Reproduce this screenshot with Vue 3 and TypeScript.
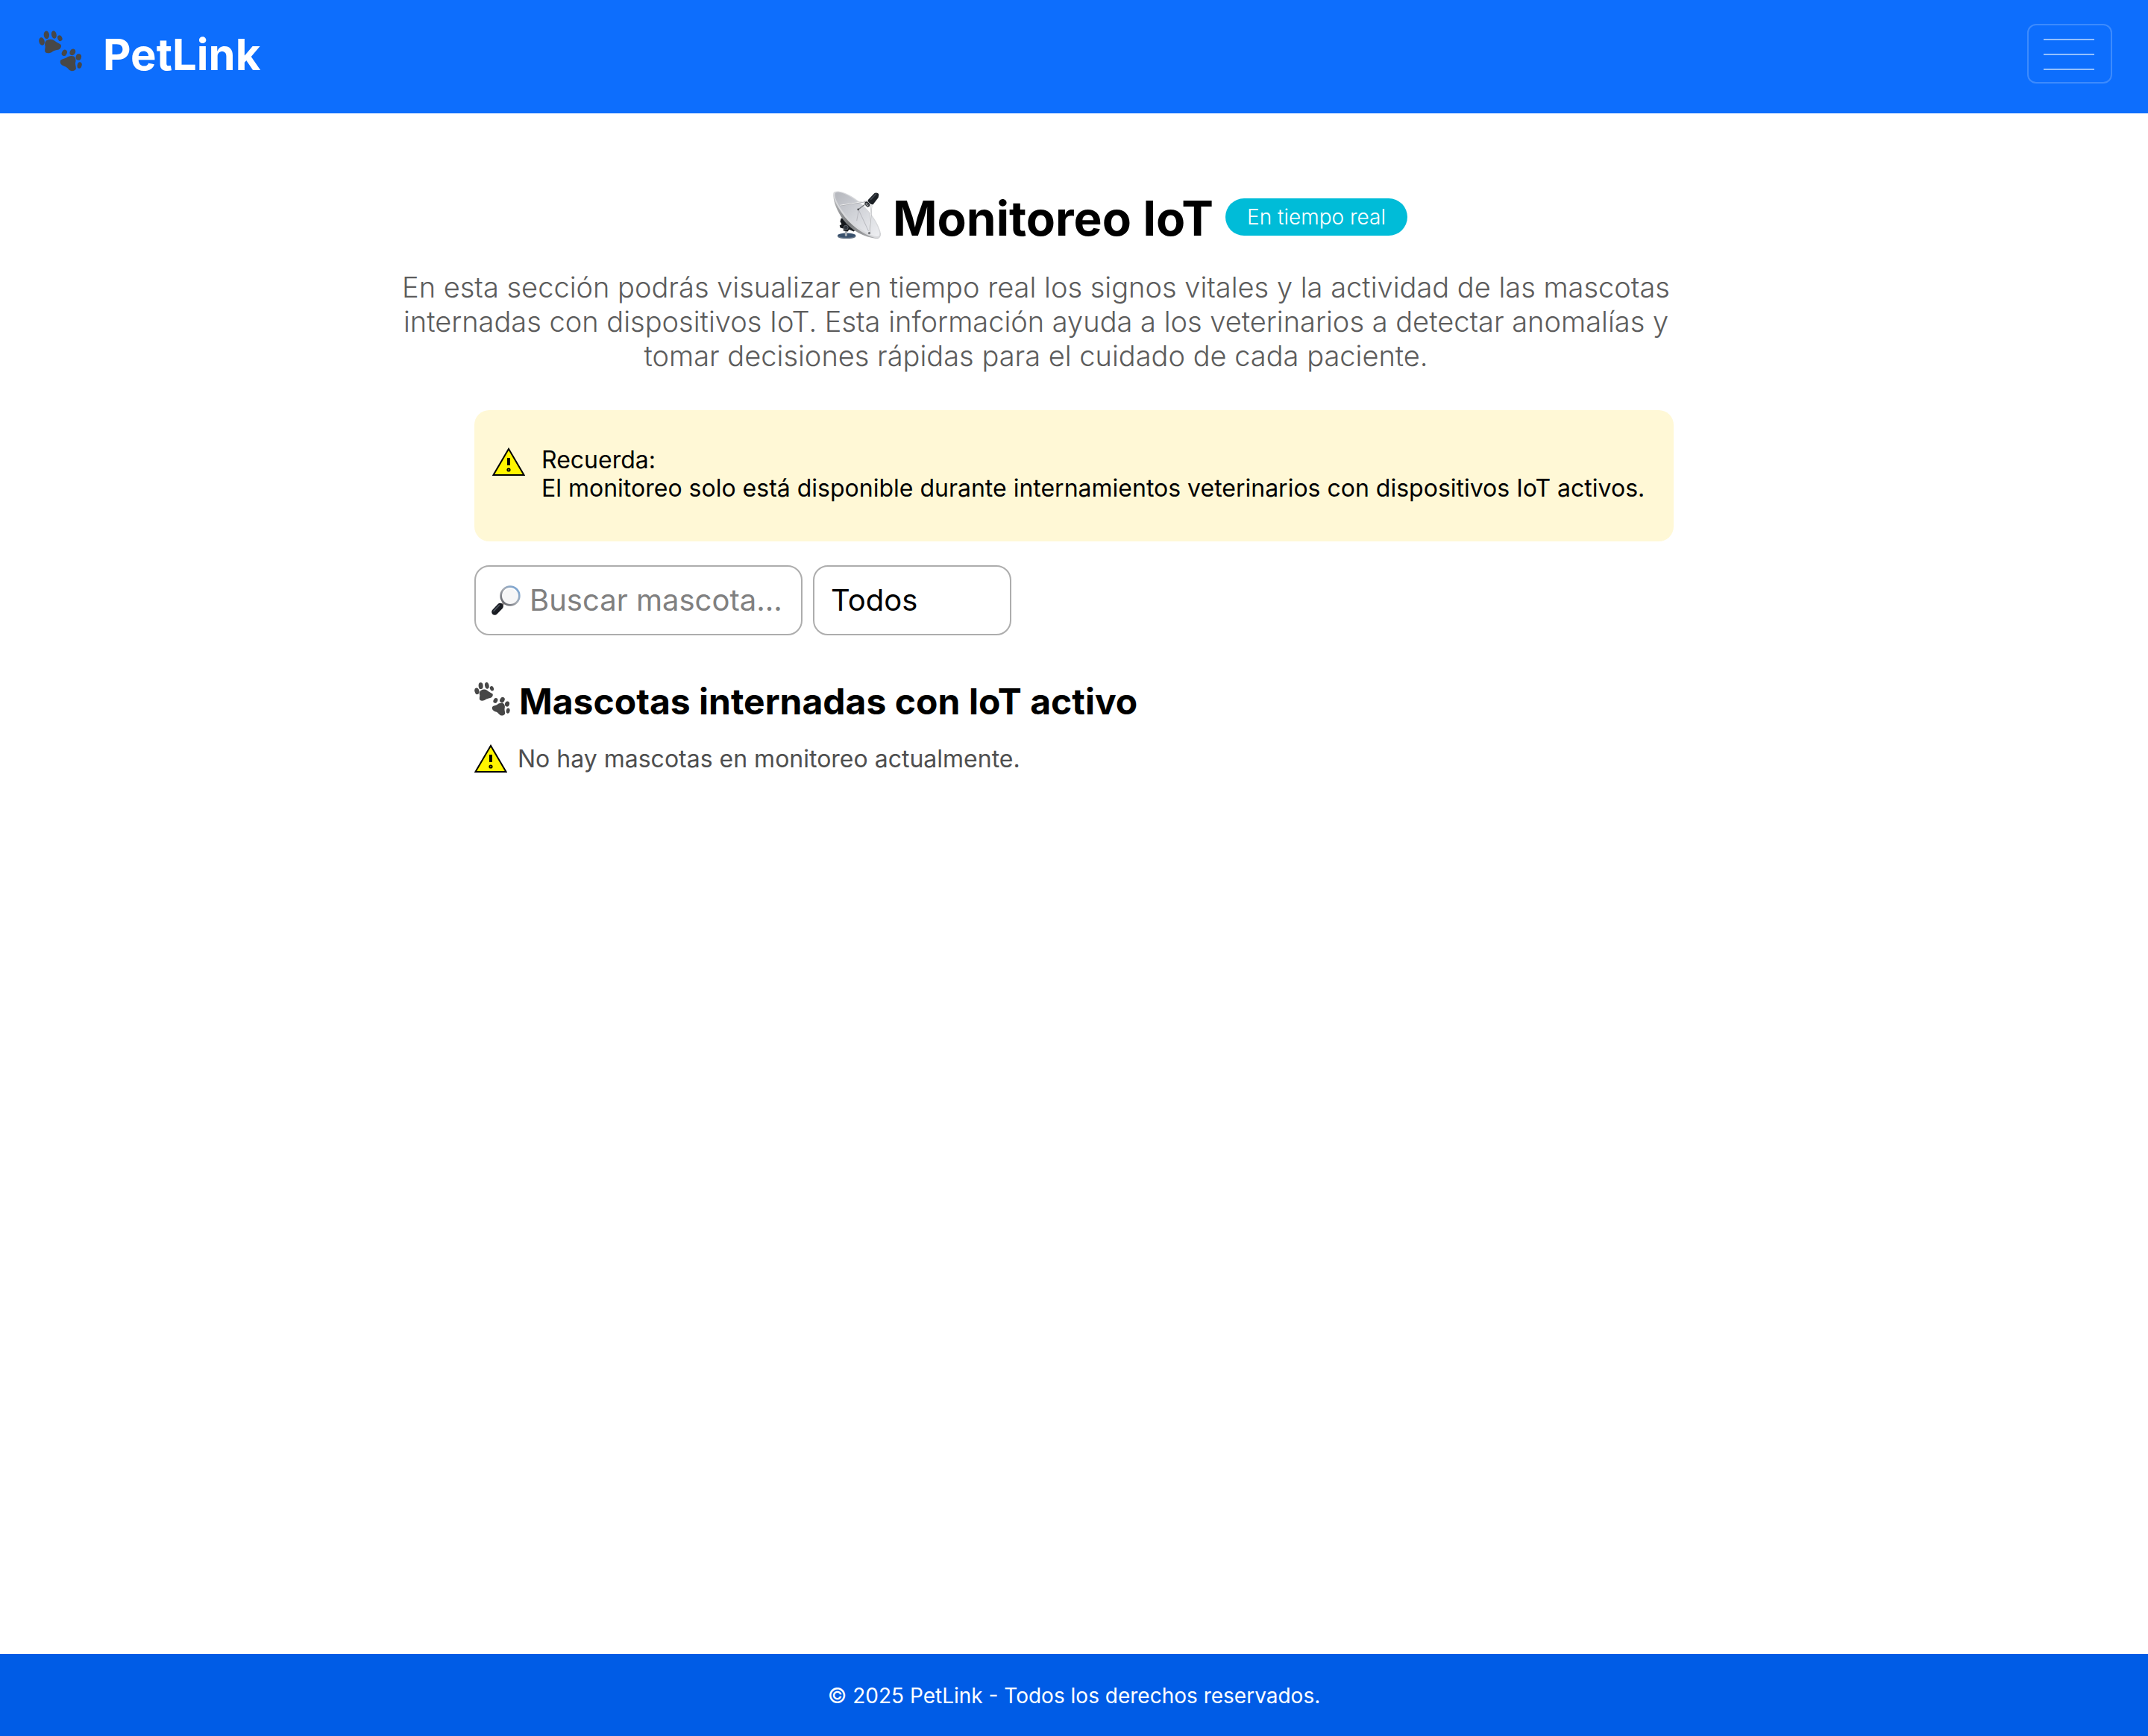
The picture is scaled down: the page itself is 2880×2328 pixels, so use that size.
<script setup lang="ts">
import { ref } from 'vue'

const search = ref('')
const filter = ref('todos')
const menuOpen = ref(false)
</script>

<template>
  <div class="page">
    <svg class="defs" aria-hidden="true">
      <symbol id="paws" viewBox="0 0 174 164">
        <g fill="#474747">
          <ellipse cx="12" cy="43" rx="11" ry="16" transform="rotate(-14 12 43)" />
          <ellipse cx="31" cy="17" rx="11" ry="16" transform="rotate(-4 31 17)" />
          <ellipse cx="61" cy="16" rx="10" ry="16" transform="rotate(-12 61 16)" />
          <ellipse cx="85" cy="30" rx="9" ry="12" transform="rotate(-24 85 30)" />
          <path d="M34 38C42 33 57 34 64 41C72 48 81 51 88 56C93 62 88 73 80 76C70 79 62 79 55 84C46 91 34 92 27 87C22 81 26 72 26 63C22 52 26 42 34 38Z" />
          <ellipse cx="103" cy="89" rx="10" ry="13" transform="rotate(28 103 89)" />
          <ellipse cx="136" cy="86" rx="11" ry="14" transform="rotate(32 136 86)" />
          <ellipse cx="160" cy="106" rx="11" ry="13" transform="rotate(14 160 106)" />
          <ellipse cx="164" cy="139" rx="9" ry="13" transform="rotate(12 164 139)" />
          <path d="M88 119C93 113 103 113 111 109C118 102 131 99 141 103C149 109 150 119 147 130C147 140 151 147 149 155C145 162 133 165 126 160C119 156 117 150 108 145C99 142 88 137 87 130C86 125 86 121 88 119Z" />
        </g>
      </symbol>
      <symbol id="warning" viewBox="0 0 44 38">
        <path d="M22 2L42.500 37H1.500Z" fill="#fff500" stroke="#000" stroke-width="2" />
        <path d="M20 14H24V24H20Z" />
        <circle cx="22" cy="30" r="1.700" fill="#fff500" stroke="#000" stroke-width="1.800" />
      </symbol>
    </svg>

    <header class="topbar">
      <a class="brand" href="#">
        <svg class="brand-icon" aria-hidden="true"><use href="#paws" /></svg>
        <span>PetLink</span>
      </a>
      <button class="toggler" type="button" aria-label="Menú" :aria-expanded="menuOpen" @click="menuOpen = !menuOpen">
        <span class="line"></span>
        <span class="line"></span>
        <span class="line"></span>
      </button>
    </header>

    <main class="content">
      <div class="title-row">
        <svg class="dish" viewBox="0 0 190 190" aria-hidden="true">
          <defs>
            <linearGradient id="bowl" x1="0" y1="0" x2="1" y2="1">
              <stop offset="0" stop-color="#b4b6bc" />
              <stop offset="0.5" stop-color="#d3d5da" />
              <stop offset="1" stop-color="#eeeff2" />
            </linearGradient>
            <linearGradient id="back" x1="0" y1="0" x2="1" y2="1">
              <stop offset="0" stop-color="#c4c5c7" />
              <stop offset="0.5" stop-color="#77797b" />
              <stop offset="1" stop-color="#b9babd" />
            </linearGradient>
          </defs>
          <path d="M18 177V183C25 193 82 193 90 183V177Z" fill="#667586" />
          <ellipse cx="54" cy="177" rx="36" ry="9" fill="#39516d" />
          <path d="M47 150H56V180H47Z" fill="#aab0b7" />
          <path d="M32 108L46 112L76 143L90 155L82 162L64 154L58 162L40 158L42 151L28 146L26 137L34 133L28 122Z" fill="#16191d" />
          <circle cx="51" cy="146" r="9" fill="#30353c" stroke="#777d84" stroke-width="2" />
          <path d="M3 6C-4 32 12 76 41 116C73 159 128 186 172 190C184 190 190 184 189 168L24 4Z" fill="url(#back)" />
          <path d="M2 7C8-4 38 0 76 23C125 53 174 111 188 161C192 184 184 193 166 187C121 174 67 136 33 85C11 52-2 23 2 7Z" fill="#d7d8db" />
          <path d="M9 8C20 0 49 10 79 30C126 62 171 115 183 160C188 180 181 184 165 180C122 167 72 128 38 80C15 48 3 22 9 8Z" fill="url(#bowl)" />
          <path d="M102 76L94 119M101 74L141 160" fill="none" stroke="#b9bac0" stroke-width="3" />
          <path d="M27 58L132 42M153 58L145 166" fill="none" stroke="#a3a5a9" stroke-width="5" />
          <path d="M27 57L132 41M153 58L144 166" fill="none" stroke="#f1f1f2" stroke-width="3" />
          <path d="M100 74L129 52" stroke="#74777b" stroke-width="4" />
          <circle cx="100" cy="74" r="4" fill="#4d4f53" />
          <circle cx="144" cy="168" r="5" fill="#75777b" />
          <path d="M138 37L164 10C169 5 183 8 182 16L180 27L159 54C152 56 139 47 138 37Z" fill="#1c2025" />
          <path d="M150 34L171 12" stroke="#434951" stroke-width="5" stroke-linecap="round" />
          <ellipse cx="136" cy="53" rx="13" ry="9" transform="rotate(48 136 53)" fill="#24272b" stroke="#d7d8da" stroke-width="2" />
          <ellipse cx="135" cy="54" rx="6" ry="3" transform="rotate(48 135 54)" fill="none" stroke="#d7d8da" stroke-width="2" />
        </svg>
        <h1>Monitoreo IoT</h1>
        <span class="badge">En tiempo real</span>
      </div>

      <p class="intro">
        En esta sección podrás visualizar en tiempo real los signos vitales y la actividad de las mascotas
        internadas con dispositivos IoT. Esta información ayuda a los veterinarios a detectar anomalías y
        tomar decisiones rápidas para el cuidado de cada paciente.
      </p>

      <div class="notice" role="note">
        <svg class="warning" aria-hidden="true"><use href="#warning" /></svg>
        <p>Recuerda:<br />El monitoreo solo está disponible durante internamientos veterinarios con dispositivos IoT activos.</p>
      </div>

      <form class="filters" @submit.prevent>
        <label class="search">
          <svg class="magnifier" viewBox="0 0 120 120" aria-hidden="true">
            <defs>
              <linearGradient id="rim" x1="0" y1="1" x2="1" y2="0">
                <stop offset="0" stop-color="#55565c" />
                <stop offset="0.5" stop-color="#a9adb4" />
                <stop offset="1" stop-color="#6fa4dc" />
              </linearGradient>
            </defs>
            <path d="M42 82L54 69" stroke="#98908d" stroke-width="10" />
            <path d="M38 84L16 107" stroke="#191c22" stroke-width="25" stroke-linecap="round" />
            <path d="M34 80L12 103" stroke="#4b525c" stroke-width="5" stroke-linecap="round" />
            <circle cx="78" cy="42" r="37" fill="#f6f6f7" stroke="url(#rim)" stroke-width="8" />
            <path d="M50 30A31 31 0 0 1 102 24" fill="none" stroke="#fff" stroke-width="4" />
          </svg>
          <input v-model="search" type="text" placeholder="Buscar mascota..." aria-label="Buscar mascota" />
        </label>
        <select v-model="filter" aria-label="Filtrar mascotas">
          <option value="todos">Todos</option>
        </select>
      </form>

      <h2>
        <svg class="heading-icon" aria-hidden="true"><use href="#paws" /></svg>
        <span>Mascotas internadas con IoT activo</span>
      </h2>
      <p class="empty">
        <svg class="warning" aria-hidden="true"><use href="#warning" /></svg>
        <span>No hay mascotas en monitoreo actualmente.</span>
      </p>
    </main>

    <footer class="footer">© 2025 PetLink - Todos los derechos reservados.</footer>
  </div>
</template>

<style>
body {
  margin: 0;
  background: #fff;
}
</style>

<style scoped>
.page {
  box-sizing: border-box;
  display: flex;
  flex-direction: column;
  min-height: 100vh;
  font-family: Inter, 'Liberation Sans', sans-serif;
  font-optical-sizing: none;
  color: #000;
}

.page *,
.page *::before {
  box-sizing: border-box;
}

svg {
  display: block;
  flex: none;
}

.defs {
  position: absolute;
  width: 0;
  height: 0;
}

h1,
h2,
p {
  margin: 0;
}

.topbar {
  display: flex;
  justify-content: space-between;
  align-items: flex-start;
  height: 152px;
  padding: 32px 48px 0 52px;
  background: #0d6efd;
}

.brand {
  display: flex;
  gap: 28px;
  margin-top: 6px;
  color: #fff;
  font-size: 58px;
  font-weight: 700;
  line-height: 70px;
  text-decoration: none;
}

.brand-icon {
  width: 58px;
  height: 55px;
  margin-top: 3px;
}

.toggler {
  display: flex;
  flex-direction: column;
  gap: 18px;
  width: 114px;
  height: 80px;
  padding: 18px 22px 0 20px;
  border: 2px solid rgba(255, 255, 255, 0.2);
  border-radius: 12px;
  background: none;
}

.line {
  width: 68px;
  height: 2px;
  background: #94c0fe;
}

.content {
  flex: 1;
  width: 100%;
  max-width: 1608px;
  margin: 0 auto;
}

.title-row {
  display: flex;
  justify-content: center;
  align-items: flex-start;
  margin-top: 104px;
  padding-left: 124px;
}

.dish {
  width: 64px;
  height: 64px;
}

h1 {
  margin: -2px 16px 0;
  font-size: 64px;
  font-weight: 700;
  line-height: 78px;
}

.badge {
  margin-top: 10px;
  padding: 8px 29px;
  border-radius: 25px;
  background: #00bcd8;
  color: #fff;
  font-size: 28px;
  font-weight: 300;
  line-height: 34px;
}

.intro {
  margin: 30px 0 0 -102px;
  color: #5c5c5c;
  font-size: 38px;
  font-weight: 300;
  line-height: 46px;
  text-align: center;
}

.notice {
  display: flex;
  gap: 22px;
  margin-top: 50px;
  padding: 48px 24px 52px;
  border-radius: 20px;
  background: #fff8d6;
  font-size: 32px;
  line-height: 38px;
}

.warning {
  width: 44px;
  height: 38px;
}

.notice .warning {
  margin-top: 2px;
}

.filters {
  display: flex;
  gap: 14px;
  margin-top: 32px;
}

.search,
select {
  height: 94px;
  border: 2px solid #adadad;
  border-radius: 20px;
  background: #fff;
}

.search {
  display: flex;
  align-items: center;
  gap: 12px;
  width: 440px;
  padding: 0 20px;
}

.magnifier {
  width: 40px;
  height: 40px;
}

input,
select {
  color: #000;
  font-family: inherit;
  font-size: 40px;
  line-height: 48px;
  font-optical-sizing: none;
}

input {
  flex: 1;
  min-width: 0;
  padding: 0;
  border: 0;
  outline: 0;
  background: none;
}

input::placeholder {
  color: #808080;
  opacity: 1;
}

select {
  width: 266px;
  padding: 0 22px;
  appearance: none;
}

h2 {
  display: flex;
  gap: 12px;
  margin-top: 60px;
  font-size: 48px;
  font-weight: 700;
  line-height: 58px;
}

.heading-icon {
  width: 48px;
  height: 45px;
  margin-top: 3px;
}

.empty {
  display: flex;
  gap: 14px;
  margin-top: 28px;
  color: #4f4f4f;
  font-size: 32px;
  line-height: 40px;
}

.footer {
  height: 110px;
  padding: 39px 24px 37px;
  background: #005ce6;
  color: #fff;
  font-size: 28px;
  line-height: 34px;
  text-align: center;
}
</style>
